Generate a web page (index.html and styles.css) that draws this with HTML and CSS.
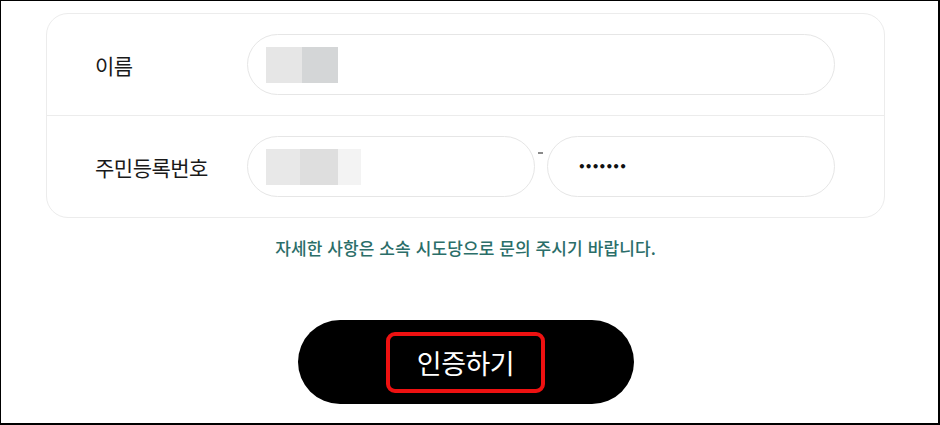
FILE: index.html
```html
<!DOCTYPE html>
<html lang="ko">
<head>
<meta charset="utf-8">
<title>인증</title>
<link rel="stylesheet" href="styles.css">
</head>
<body>
<div class="frame">
  <div class="card">
    <div class="row row-name">
      <div class="label">이름</div>
      <div class="field">
        <span class="blur b1"></span><span class="blur b2"></span>
      </div>
    </div>
    <div class="row row-id">
      <div class="label">주민등록번호</div>
      <div class="id-group">
        <div class="field">
          <span class="blur c1"></span><span class="blur c2"></span><span class="blur c3"></span>
        </div>
        <span class="dash"></span>
        <div class="field">
          <span class="dots">•••••••</span>
        </div>
      </div>
    </div>
  </div>
  <p class="notice">자세한 사항은 소속 시도당으로 문의 주시기 바랍니다.</p>
  <div class="actions">
    <button class="btn" type="button"><span class="btn-label">인증하기</span></button>
  </div>
</div>
</body>
</html>
```
FILE: styles.css
```css
* { box-sizing: border-box; }
html, body { margin: 0; padding: 0; background: #fff; }
body {
  font-family: "Noto Sans CJK KR", "Noto Sans", sans-serif;
  color: #222;
}
.frame {
  width: 940px;
  height: 425px;
  border-style: solid;
  border-color: #000;
  border-width: 1px 2px 2px 1px;
  padding: 12px 0 0 45px;
  overflow: hidden;
}
.card {
  width: 839px;
  border: 1px solid #ececec;
  border-radius: 22px;
}
.row {
  display: grid;
  grid-template-columns: 152px 588px;
  align-items: center;
  padding: 20px 48px;
}
.row-name { border-bottom: 1px solid #ececec; }
.label {
  font-size: 21px;
  font-weight: 400;
  line-height: 28px;
  letter-spacing: -0.5px;
  color: #1a1a1a;
  white-space: nowrap;
}
.field {
  height: 61px;
  border: 1px solid #e6e6e6;
  border-radius: 31px;
  display: flex;
  align-items: center;
  padding-left: 18px;
}
.id-group {
  display: grid;
  grid-template-columns: 288px 12px 288px;
  align-items: start;
}
.dash {
  width: 5px;
  height: 2px;
  margin: 16px 0 0 3px;
  background: #8a8a8a;
}
.blur { display: inline-block; height: 36px; }
.b1 { width: 36px; background: #e6e6e6; }
.b2 { width: 36px; background: #d4d6d7; }
.c1 { width: 34px; background: #e8e8e8; }
.c2 { width: 38px; background: #dedede; }
.c3 { width: 23px; background: #f3f3f3; }
.dots {
  padding-left: 12px;
  font-family: "DejaVu Sans", sans-serif;
  font-size: 12px;
  font-weight: bold;
  letter-spacing: -0.8px;
  color: #111;
}
.notice {
  margin: 17px 0 0 0;
  width: 839px;
  text-align: center;
  font-size: 17px;
  font-weight: 500;
  line-height: 26px;
  color: #2b6e69;
  letter-spacing: 0.1px;
}
.actions {
  width: 839px;
  display: flex;
  justify-content: center;
  margin-top: 59px;
}
.btn {
  width: 336px;
  height: 84px;
  border: none;
  border-radius: 42px;
  background: #000;
  display: flex;
  align-items: center;
  justify-content: center;
  padding: 0;
  font-family: inherit;
  cursor: pointer;
}
.btn-label {
  display: flex;
  align-items: center;
  justify-content: center;
  width: 159px;
  height: 61px;
  border: 4px solid #ee1111;
  border-radius: 9px;
  font-size: 27px;
  color: #fff;
  letter-spacing: -0.5px;
}
```
